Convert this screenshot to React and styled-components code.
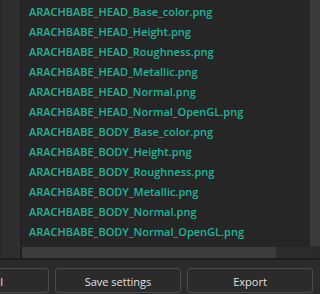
import React from "react";
import styled, { createGlobalStyle } from "styled-components";

const Global = createGlobalStyle`
  html, body { margin: 0; padding: 0; background: #2b2b2b; }
  body { width: 320px; height: 294px; overflow: hidden; font-family: "Open Sans", "Noto Sans", sans-serif; }
`;

const Page = styled.div`
  width: 320px;
  height: 294px;
  display: flex;
  flex-direction: column;
  background: #2b2b2b;
`;

const Top = styled.div`
  height: 258px;
  display: flex;
`;

const SideStrip = styled.div`
  width: 22px;
  box-sizing: border-box;
  background: #2f2f2f;
  border-left: 3px solid #2a2a2a;
  border-right: 2px solid #222222;
`;

const ListArea = styled.div`
  flex: 1;
  display: flex;
  flex-direction: column;
  background: #262626;
`;

const List = styled.ul`
  flex: 1;
  list-style: none;
  margin: 0;
  padding: 2px 0 0 7px;
  overflow: hidden;
`;

const Item = styled.li`
  height: 20px;
  line-height: 20px;
  font-size: 11px;
  font-weight: 600;
  color: #1eb59b;
  white-space: nowrap;
`;

const HScroll = styled.div`
  height: 11px;
  background: #2c2c2c;
  display: flex;
`;

const HThumb = styled.div`
  width: 254px;
  background: #3c3c3c;
`;

const VScrollCol = styled.div`
  width: 10px;
  display: flex;
  flex-direction: column;
`;

const VThumb = styled.div`
  flex: 1;
  background: #3a3a3a;
`;

const Corner = styled.div`
  height: 12px;
  background: #2a2a2a;
`;

const Divider = styled.div`
  height: 2px;
  background: #1f1f1f;
`;

const ButtonRow = styled.div`
  flex: 1;
  display: flex;
  justify-content: flex-end;
  align-items: flex-start;
  gap: 6px;
  padding: 8px 7px 0 0;
  overflow: hidden;
`;

const Button = styled.button`
  flex: 0 0 126px;
  width: 126px;
  height: 25px;
  box-sizing: border-box;
  background: #2b2b2b;
  border: 1px solid #4a4a4a;
  border-radius: 3px;
  color: #e0e0e0;
  font-family: "Open Sans", "Noto Sans", sans-serif;
  font-size: 11px;
  padding: 2px 0 0;
`;

const files = [
  "ARACHBABE_HEAD_Base_color.png",
  "ARACHBABE_HEAD_Height.png",
  "ARACHBABE_HEAD_Roughness.png",
  "ARACHBABE_HEAD_Metallic.png",
  "ARACHBABE_HEAD_Normal.png",
  "ARACHBABE_HEAD_Normal_OpenGL.png",
  "ARACHBABE_BODY_Base_color.png",
  "ARACHBABE_BODY_Height.png",
  "ARACHBABE_BODY_Roughness.png",
  "ARACHBABE_BODY_Metallic.png",
  "ARACHBABE_BODY_Normal.png",
  "ARACHBABE_BODY_Normal_OpenGL.png",
];

export default function App() {
  return (
    <Page>
      <Global />
      <Top>
        <SideStrip />
        <ListArea>
          <List>
            {files.map((f) => (
              <Item key={f}>{f}</Item>
            ))}
          </List>
          <HScroll>
            <HThumb />
          </HScroll>
        </ListArea>
        <VScrollCol>
          <VThumb />
          <Corner />
        </VScrollCol>
      </Top>
      <Divider />
      <ButtonRow>
        <Button>Cancel</Button>
        <Button>Save settings</Button>
        <Button>Export</Button>
      </ButtonRow>
    </Page>
  );
}
